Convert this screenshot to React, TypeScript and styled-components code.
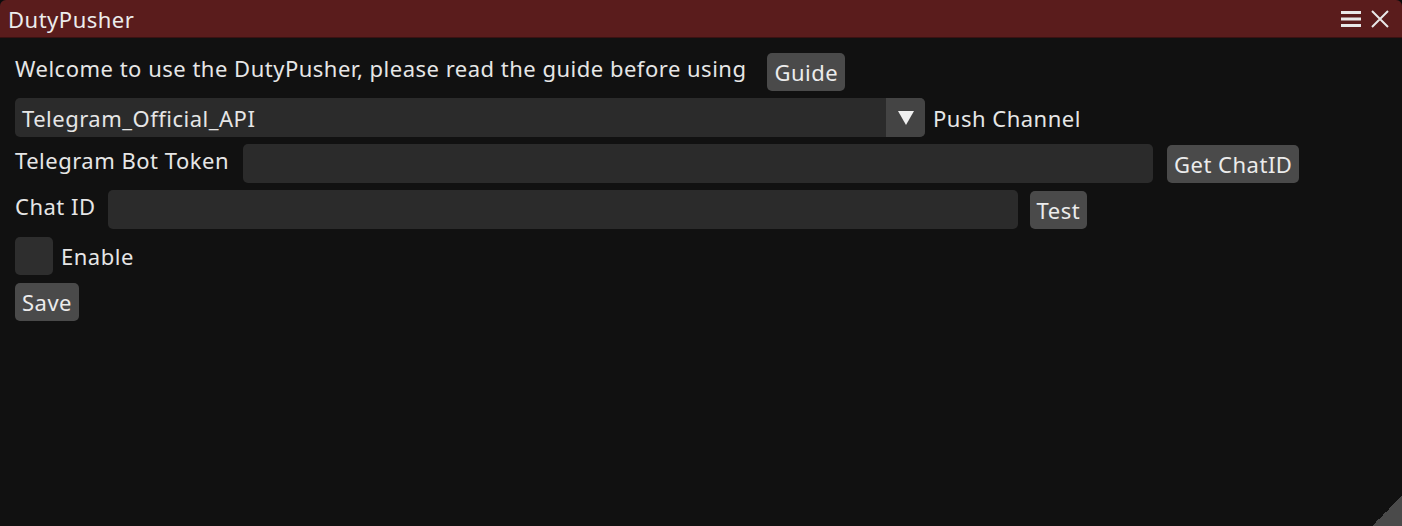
import styled, { createGlobalStyle } from "styled-components";

const GlobalStyle = createGlobalStyle`
    html, body {
        margin: 0;
        padding: 0;
        background: #0c0c0c;
    }
    body {
        font-family: "Noto Sans", "Open Sans", sans-serif;
        font-size: 22px;
        letter-spacing: 0.5px;
        color: #e6e6e6;
    }
`;

const App = () => {
    return (
        <>
            <GlobalStyle />
            <Window>
                <TitleBar>
                    <Title>DutyPusher</Title>
                    <TitleIcons>
                        <svg width="20" height="18" viewBox="0 0 20 18">
                            <rect x="0" y="1" width="20" height="3" fill="#e8e8e8" />
                            <rect x="0" y="7.5" width="20" height="3" fill="#e8e8e8" />
                            <rect x="0" y="14" width="20" height="3" fill="#e8e8e8" />
                        </svg>
                        <svg width="20" height="20" viewBox="0 0 20 20">
                            <path d="M2 2 L18 18 M18 2 L2 18" stroke="#e8e8e8" strokeWidth="2" />
                        </svg>
                    </TitleIcons>
                </TitleBar>
                <Body>
                    <Row $gap={21}>
                        <Label>Welcome to use the DutyPusher, please read the guide before using</Label>
                        <Button>Guide</Button>
                    </Row>
                    <Row $gap={8}>
                        <Combo>
                            <ComboText>Telegram_Official_API</ComboText>
                            <ComboArrow>
                                <svg width="18" height="16" viewBox="0 0 18 16">
                                    <path d="M1 1 L17 1 L9 15 Z" fill="#f0f0f0" />
                                </svg>
                            </ComboArrow>
                        </Combo>
                        <FrameLabel>Push Channel</FrameLabel>
                    </Row>
                    <Row $gap={14}>
                        <Label>Telegram Bot Token</Label>
                        <Input />
                        <Button>Get ChatID</Button>
                    </Row>
                    <Row $gap={12}>
                        <Label>Chat ID</Label>
                        <Input />
                        <Button>Test</Button>
                    </Row>
                    <Row $gap={8}>
                        <Checkbox />
                        <FrameLabel>Enable</FrameLabel>
                    </Row>
                    <Row $gap={8}>
                        <Button>Save</Button>
                    </Row>
                </Body>
                <Grip />
            </Window>
        </>
    );
};

const Window = styled.div`
    position: relative;
    width: 1402px;
    height: 526px;
    background: #111111;
    overflow: hidden;
    border-radius: 6px 6px 0 0;
`;

const TitleBar = styled.div`
    display: flex;
    align-items: center;
    justify-content: space-between;
    height: 38px;
    padding: 0 12px 0 8px;
    box-sizing: border-box;
    background: #5a1c1c;
    border-bottom: 1px solid #3a1212;
`;

const Title = styled.div`
    color: #ececec;
    line-height: 38px;
`;

const TitleIcons = styled.div`
    display: flex;
    align-items: center;
    gap: 9px;
`;

const Body = styled.div`
    display: flex;
    flex-direction: column;
    gap: 7px;
    padding: 14px 15px;
`;

const Row = styled.div<{ $gap: number }>`
    display: flex;
    align-items: center;
    gap: ${(p) => p.$gap}px;
    height: 39px;
`;

const Label = styled.span`
    white-space: nowrap;
    padding-bottom: 8px;
    color: #e6e6e6;
`;

const FrameLabel = styled.span`
    white-space: nowrap;
    color: #e6e6e6;
`;

const Button = styled.div`
    display: flex;
    align-items: center;
    height: 38px;
    padding: 0 7px;
    background: #4a4a4a;
    border-radius: 5px;
    color: #ececec;
    white-space: nowrap;
`;

const Combo = styled.div`
    display: flex;
    width: 910px;
    height: 39px;
    background: #2b2b2b;
    border-radius: 5px;
    overflow: hidden;
`;

const ComboText = styled.div`
    flex: 1;
    display: flex;
    align-items: center;
    padding-left: 7px;
    color: #e6e6e6;
`;

const ComboArrow = styled.div`
    display: flex;
    align-items: center;
    justify-content: center;
    width: 39px;
    background: #444444;
`;

const Input = styled.div`
    width: 910px;
    height: 39px;
    background: #2b2b2b;
    border-radius: 5px;
`;

const Checkbox = styled.div`
    width: 38px;
    height: 38px;
    background: #2e2e2e;
    border-radius: 5px;
`;

const Grip = styled.div`
    position: absolute;
    right: 0;
    bottom: 0;
    width: 30px;
    height: 30px;
    background: linear-gradient(to bottom right, transparent 50%, #4a4a4a 50%);
`;

export default App;
